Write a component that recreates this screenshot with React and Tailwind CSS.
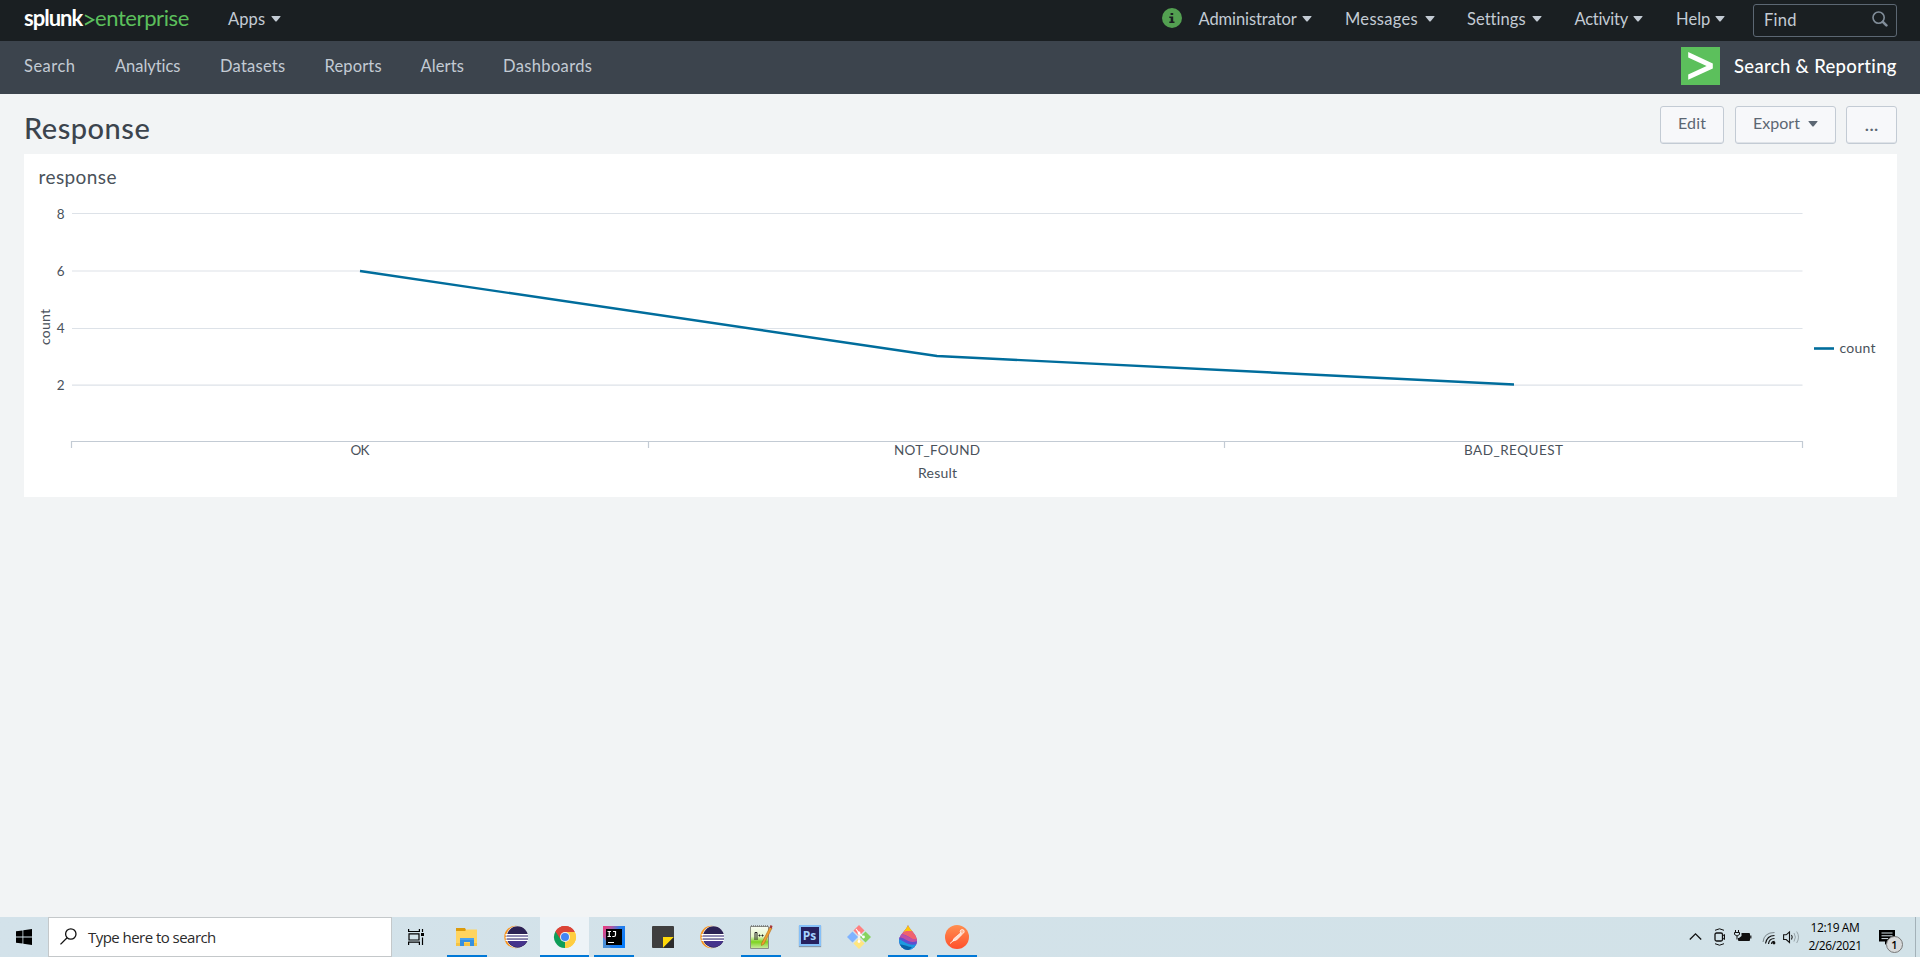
import React from "react";

const Caret = ({ className = "text-[#c3cbd4]" }) => (
  <svg width="10" height="6" viewBox="0 0 10 6" className={className} fill="currentColor">
    <path d="M0.8 0H9.2Q9.8 0.2 9.4 0.8L5.5 5.4Q5 5.8 4.5 5.4L0.6 0.8Q0.2 0.2 0.8 0Z" />
  </svg>
);

const topMenus = [
  { label: "Administrator", box: "w-[146.5px]", text: "w-[98.5px] tracking-[-0.08px]" },
  { label: "Messages", box: "w-[122px]", text: "w-[74.5px] tracking-[0.3px]" },
  { label: "Settings", box: "w-[107.5px]", text: "w-[60px] tracking-[0.05px]" },
  { label: "Activity", box: "w-[101.5px]", text: "w-[53.5px] tracking-[-0.28px]" },
  { label: "Help", box: "w-[77px]", text: "w-[34px] tracking-[0.05px]" },
];

const navLinks = [
  { label: "Search", cls: "w-[91px] tracking-[0.5px]" },
  { label: "Analytics", cls: "w-[105px] tracking-[-0.05px]" },
  { label: "Datasets", cls: "w-[104.5px] tracking-[0.25px]" },
  { label: "Reports", cls: "w-[96px] tracking-[0.15px]" },
  { label: "Alerts", cls: "w-[82.5px] tracking-[0.1px]" },
  { label: "Dashboards", cls: "w-[100px] tracking-[0.35px]" },
];

function TopBar() {
  return (
    <header className="flex h-[41px] bg-[#1a1f22] pl-6 pr-[23px] text-[16.5px] leading-6 text-[#c3cbd4]">
      <div className="flex h-[36px] w-[204px] items-center whitespace-nowrap text-[22px] leading-none">
        <span className="w-[60px] font-bold tracking-[-1px] text-white">splunk</span>
        <svg width="11" height="14" viewBox="0 0 11 14" className="mt-1" fill="none" stroke="#5cc05c" strokeWidth="1.8">
          <path d="M1 2.2L9.4 6.8L1 11.6" />
        </svg>
        <span className="text-[#5cc05c] tracking-[-0.4px]">enterprise</span>
      </div>
      <div className="flex h-[37px] items-start pt-[7px]">
        <span className="w-[43px] tracking-[0.1px]">Apps</span>
        <Caret className="mt-[9px] text-[#c3cbd4]" />
      </div>
      <div className="ml-auto flex h-[37px] items-start pt-[7px]">
        <svg width="20" height="20" viewBox="0 0 20 20" className="mr-[16.5px] mt-px">
          <circle cx="10" cy="10" r="10" fill="#53a051" />
          <path d="M8.600 4.900h2.600v2.200H8.600zM7.300 8.400h3.900v5.200h1.300v1.500H7.300v-1.500h1.400V9.900H7.300z" fill="#1a1f22" />
        </svg>
        {topMenus.map((m) => (
          <div key={m.label} className={`flex items-start ${m.box}`}>
            <span className={`mr-[5px] whitespace-nowrap ${m.text}`}>{m.label}</span>
            <Caret className="mt-[9px] text-[#c3cbd4]" />
          </div>
        ))}
      </div>
      <div className="mt-1 flex h-[33px] w-[144px] items-center justify-between rounded-[3px] border border-[#5c6773] pl-2.5 pr-2">
        <span className="-mt-px tracking-[0.3px] text-[#c3cbd4]">Find</span>
        <svg width="16" height="16" viewBox="0 0 16 16" fill="none" stroke="#818d99" className="-mt-1">
          <circle cx="6.6" cy="6.6" r="5.6" strokeWidth="1.6" />
          <path d="M10.8 10.8L14.4 14.4" strokeWidth="2.6" strokeLinecap="round" />
        </svg>
      </div>
    </header>
  );
}

function NavBar() {
  return (
    <nav className="flex h-[53px] bg-[#3c444d] pl-6 pr-[23px]">
      <div className="flex h-[50px] items-start pt-[13px] text-[16.5px] leading-6 text-[#c3cbd4]">
        {navLinks.map((n) => (
          <span key={n.label} className={n.cls}>{n.label}</span>
        ))}
      </div>
      <div className="ml-auto flex h-[50px] items-center">
        <svg width="39" height="38" viewBox="0 0 39 38">
          <rect width="39" height="38" fill="#5cc05c" />
          <path d="M7.2 5L31.8 16.4V21.4L7.2 32.8V27.4L25.6 19L7.2 10.6Z" fill="#fff" />
        </svg>
        <span className="ml-[14px] w-[163px] whitespace-nowrap text-[18.5px] font-medium leading-6 tracking-[0.32px] text-white">Search &amp; Reporting</span>
      </div>
    </nav>
  );
}

const btn = "flex h-[38px] justify-center rounded-[3px] border border-[#c3cbd4] bg-[#f7f8fa] text-[16px] leading-6 text-[#5c6773] shadow-[inset_0_-1px_0_#dfe3e8]";

function Chart() {
  const rows = [
    { v: 8, y: 213.5, t: 219 },
    { v: 6, y: 271, t: 275.5 },
    { v: 4, y: 328.5, t: 333 },
    { v: 2, y: 385.2, t: 389.5 },
  ];
  return (
    <svg width="1873" height="303" viewBox="24 194 1873 303" className="block" fontSize="13" fill="#4a525b">
      {rows.map((r) => (
        <g key={r.v}>
          <path d={`M72 ${r.y}H1802.5`} stroke="#dde2e8" strokeWidth="1.2" />
          <text x="64.5" y={r.t} textAnchor="end" fontSize="13.5">{r.v}</text>
        </g>
      ))}
      <path d="M71.5 448V441.5H1802.5V448M648.5 441.5V448M1224.5 441.5V448" fill="none" stroke="#c3cbd4" strokeWidth="1.2" />
      <path d="M360 271L937 356L1514 384.5" fill="none" stroke="#006d9c" strokeWidth="2.4" strokeLinejoin="round" />
      <text transform="translate(50 327) rotate(-90)" textAnchor="middle" textLength="36" fontSize="14">count</text>
      <text x="360" y="455" textAnchor="middle" textLength="19" fontSize="13.5">OK</text>
      <text x="937" y="455" textAnchor="middle" textLength="86" fontSize="13.5">NOT_FOUND</text>
      <text x="1513.5" y="455" textAnchor="middle" textLength="99" fontSize="13.5">BAD_REQUEST</text>
      <text x="937.5" y="478" textAnchor="middle" textLength="39" fontSize="14">Result</text>
      <path d="M1814 348.5H1834" stroke="#006d9c" strokeWidth="2.6" />
      <text x="1839.5" y="353" textLength="36" fontSize="14">count</text>
    </svg>
  );
}

const Folder = () => (
  <svg width="24" height="24" viewBox="0 0 24 24">
    <path d="M1 3h9l1 2v3H1z" fill="#dc9b0c" />
    <path d="M1 6h9l1.500-1.500H22V21H1z" fill="#ffd45f" />
    <path d="M1 18h21v3H1z" fill="#f5c343" />
    <path d="M5 13h14v8h-4v-4H9v4H5z" fill="#3590e0" />
    <path d="M5 13h14v2H5z" fill="#4aa3ee" />
  </svg>
);
const Eclipse = () => (
  <svg width="24" height="24" viewBox="0 0 24 24">
    <circle cx="11.500" cy="12" r="11.200" fill="#f7941e" />
    <circle cx="13.200" cy="12" r="11" fill="#fff" />
    <circle cx="13.500" cy="12" r="10.700" fill="#2c2255" />
    <path d="M4 16h19c-2 4-5 6-9.500 6S6 19 4 16z" fill="#46348c" />
    <path d="M1.500 9H24v1.600H1.500zM1.500 12H24v1.600H1.500zM1.500 14.800H24v1.300H1.500z" fill="#fff" />
    <path d="M2.500 10.600H24V12H2.500zM2.500 13.600H24v1.200H2.500z" fill="#8f8ab8" />
  </svg>
);
const Chrome = () => (
  <svg width="24" height="24" viewBox="0 0 24 24">
    <path d="M12 12L2.470 6.500A11 11 0 0 1 21.530 6.500z" fill="#db4437" />
    <path d="M12 12L21.530 6.500A11 11 0 0 1 12 23z" fill="#ffcd40" />
    <path d="M12 12L12 23A11 11 0 0 1 2.470 6.500z" fill="#0f9d58" />
    <path d="M12 7H21.800A11 11 0 0 0 2.470 6.500L7.700 14.500z" fill="#db4437" />
    <path d="M12 7H21.800A11 11 0 0 1 12 23L16.300 14.500z" fill="#ffcd40" />
    <circle cx="12" cy="12" r="5" fill="#f1f1f1" />
    <circle cx="12" cy="12" r="4" fill="#4285f4" />
  </svg>
);
const IntelliJ = () => (
  <svg width="24" height="24" viewBox="0 0 24 24">
    <defs>
      <linearGradient id="ij" x1="0" y1="0" x2="1" y2="0.600">
        <stop offset="0" stopColor="#f0387a" />
        <stop offset="0.300" stopColor="#b655a0" />
        <stop offset="0.600" stopColor="#2a7de8" />
        <stop offset="1" stopColor="#087cfa" />
      </linearGradient>
    </defs>
    <rect x="1" y="1" width="22" height="22" fill="url(#ij)" />
    <path d="M1 12l8 11H1z" fill="#4a90d8" />
    <rect x="4" y="4" width="16" height="16" fill="#000" />
    <path d="M5.500 6.500h3.500M7.250 6.500v5M5.500 11.500h3.500M11 6.500h2.500v3.500q0 1.500-1.500 1.500H10.300M6 17.500h6" stroke="#fff" strokeWidth="1.200" fill="none" />
  </svg>
);
const Sticky = () => (
  <svg width="24" height="24" viewBox="0 0 24 24">
    <rect x="1" y="1" width="22" height="22" rx="1" fill="#3f3f3f" />
    <path d="M12 12h11L12 23z" fill="#ffd90a" />
    <path d="M23 12v11H12z" fill="#2c2c2c" />
  </svg>
);
const Notepad = () => (
  <svg width="24" height="26" viewBox="0 0 24 26">
    <defs>
      <linearGradient id="np" x1="0" y1="0" x2="0" y2="1">
        <stop offset="0" stopColor="#f8fbf2" />
        <stop offset="0.450" stopColor="#e5f7c8" />
        <stop offset="0.700" stopColor="#7dd321" />
        <stop offset="1" stopColor="#cdeca3" />
      </linearGradient>
    </defs>
    <path d="M1.500 2.500h18v22h-18z" fill="url(#np)" stroke="#8a8f86" strokeWidth="1" />
    <path d="M2 2h17" stroke="#777" strokeWidth="1.500" strokeDasharray="1 1" />
    <path d="M6 16V8.500h2V16M9.500 11.500h2M12.500 11.500h2M10.500 10.500v2M13.500 10.500v2" stroke="#222" fill="none" strokeWidth="1" />
    <path d="M12.500 19.500L21 3l2 1-8 16-2.500 1.500z" fill="#f0a030" stroke="#b06a18" strokeWidth="0.600" />
    <path d="M20.500 3.500l1-2.500 2 1-.7 2.500z" fill="#a83a3a" />
  </svg>
);
const Photoshop = () => (
  <div className="mb-[3px] flex h-[21px] w-[22px] items-center justify-center border-2 border-[#86c0f8] bg-[#26215f] text-[12px] font-bold leading-none text-[#a5d2ff] shadow-[0_1px_1px_#8899aa]">Ps</div>
);
const Git = () => (
  <svg width="24" height="24" viewBox="0 0 24 24">
    <path d="M12 0l5.500 5.500L12 11 6.500 5.500z" fill="#ff8080" />
    <path d="M5.500 6.500L11 12l-5.500 5.500L0 12z" fill="#80b3ff" />
    <path d="M18.500 6.500L24 12l-5.500 5.500L13 12z" fill="#87d35f" />
    <path d="M12 13l5.500 5.500L12 24l-5.500-5.500z" fill="#ffe680" />
    <path d="M9 4l3 4v8M12 8l4 4" stroke="#fff" strokeWidth="1.100" fill="none" />
    <circle cx="12" cy="8" r="1.400" fill="#fff" />
    <circle cx="16.500" cy="12" r="1.400" fill="#fff" />
    <circle cx="12" cy="16.500" r="1.400" fill="#fff" />
  </svg>
);
const Drop = () => (
  <svg width="20" height="25" viewBox="0 0 20 25">
    <defs>
      <clipPath id="dropClip">
        <path d="M10 0C11 4 19 9 19 16A9 9 0 0 1 1 16C1 9 8 6 10 0z" />
      </clipPath>
    </defs>
    <g clipPath="url(#dropClip)">
      <rect width="20" height="25" fill="#8a4bc8" />
      <path d="M6 0h9v8L5 7z" fill="#ffc60a" />
      <path d="M3 9C8 4 12 7 20 6V16C14 16 12 10 3 9z" fill="#f0626e" />
      <path d="M0 9C8 8 11 15 20 14V18C12 20 8 12 0 13z" fill="#c04fa5" />
      <path d="M0 12C7 12 10 20 20 16V20C12 22 8 17 0 18z" fill="#5d4fd0" />
      <path d="M0 14C6 15 9 22 20 19V25H0z" fill="#1c9be0" />
      <path d="M0 20c5-2 9 2 14 2l-3 3H0z" fill="#0a62a8" />
    </g>
  </svg>
);
const Postman = () => (
  <svg width="24" height="24" viewBox="0 0 24 24">
    <defs>
      <linearGradient id="pm" x1="0" y1="0" x2="0" y2="1">
        <stop offset="0" stopColor="#ff8f50" />
        <stop offset="1" stopColor="#ff4f2b" />
      </linearGradient>
    </defs>
    <circle cx="12" cy="12" r="12" fill="url(#pm)" />
    <circle cx="17.200" cy="6.500" r="2" fill="#ffb898" stroke="#fff" strokeWidth="0.700" />
    <path d="M15.500 8l1.500 1.500-5.500 5.500-3.500 1 .8-2.300z" fill="#ffe0d2" stroke="#fff" strokeWidth="0.700" />
    <path d="M5 18.500l4-3.500" stroke="#fff" strokeWidth="0.900" />
  </svg>
);

const apps = [
  { id: "files", Icon: Folder, open: true },
  { id: "eclipse", Icon: Eclipse },
  { id: "chrome", Icon: Chrome, active: true },
  { id: "idea", Icon: IntelliJ, open: true },
  { id: "sticky", Icon: Sticky },
  { id: "eclipse2", Icon: Eclipse },
  { id: "npp", Icon: Notepad, open: true },
  { id: "ps", Icon: Photoshop },
  { id: "git", Icon: Git },
  { id: "paint", Icon: Drop, open: true },
  { id: "postman", Icon: Postman, open: true },
];

function Taskbar() {
  return (
    <footer className="flex h-10 bg-linear-to-r from-[#d3e2ea] to-[#d2e2e8] font-['Open_Sans',sans-serif]">
      <div className="flex w-12 items-center justify-center">
        <svg width="16" height="16" viewBox="0 0 16 16">
          <path d="M0 2.300L6.500 1.400V7.600H0zM7.300 1.300L16 0V7.600H7.300zM0 8.400H6.500V14.600L0 13.700zM7.300 8.400H16V16L7.300 14.700z" />
        </svg>
      </div>
      <div className="flex w-[344px] items-center border border-[#c4c8ca] bg-white pl-[11px]">
        <svg width="17" height="17" viewBox="0 0 17 17" fill="none" stroke="#111" strokeWidth="1.300" className="-mt-0.5">
          <circle cx="10.800" cy="6" r="5.200" />
          <path d="M7.100 9.800L0.500 16.400" />
        </svg>
        <span className="ml-[11px] text-[15px] tracking-[-0.54px] text-[#2b2b2b]">Type here to search</span>
      </div>
      <div className="flex w-[50px] items-center pl-4">
        <svg width="17" height="16" viewBox="0 0 17 16" fill="none" stroke="#000" strokeWidth="1.200">
          <path d="M0.600 0V2.500H11.400V0M0.600 16V13.200H11.400V16M1 4.800H11V11H1zM14.500 0V3M14.500 8.500V16" />
          <path d="M13 4h3v3h-3z" fill="#000" stroke="none" />
        </svg>
      </div>
      <div className="flex">
        {apps.map(({ id, Icon, open, active }) => (
          <div key={id} className={`flex h-10 w-[49px] flex-col items-center ${active ? "bg-[#edf3f7]" : ""}`}>
            <div className="flex h-[38px] items-center justify-center pt-0.5">
              <Icon />
            </div>
            <div className={`h-0.5 ${active ? "w-[49px] bg-[#0078d7]" : open ? "w-10 bg-[#0078d7]" : ""}`} />
          </div>
        ))}
      </div>
      <div className="ml-auto flex items-center">
        <svg width="112" height="18" viewBox="0 0 112 18" fill="none" stroke="#111" strokeWidth="1.300">
          <path d="M0.800 11.500L6.500 5.800L12.200 11.500" />
          <path d="M26 2.300q4.500-3 9 0M26 15.700q4.500 3 9 0" strokeWidth="1" />
          <rect x="26" y="5" width="7.500" height="8" rx="1.500" />
          <path d="M33.500 8l2-1.500v5L33.500 10" strokeWidth="1" />
          <path d="M52.500 5.500H60.500V12.500H49.500V10" strokeWidth="1" />
          <path d="M52.500 6H60V12H50V10L52.500 8z" fill="#111" stroke="none" />
          <path d="M61.800 7.500v3" strokeWidth="1.200" />
          <path d="M46.500 2v2.500M49.500 2v2.500M48 8v3.500" strokeWidth="1" />
          <path d="M45.500 4.500h5v2q-2.500 3-5 0z" strokeWidth="1" />
          <g stroke="#7a858a" strokeWidth="1"><path d="M74 14Q75 4.500 85.500 4.500" /></g>
          <path d="M76.500 15.500Q78 7.500 85.500 7.500M79.500 16Q80 10.500 85.500 10.500M82.500 16Q82.800 13.400 85.500 13.400" strokeWidth="1.200" />
          <circle cx="85" cy="15" r="1.400" fill="#111" stroke="none" />
          <path d="M94.600 6.800h2.600L100.500 4v10.500l-3.300-3h-2.600z" strokeWidth="1.100" />
          <path d="M102.500 7q1.500 2 0 4.500" strokeWidth="1.100" />
          <path d="M105 5q2.800 4 0 8.500M107.700 3.500q3.600 5.500 0 11.500" stroke="#98a5aa" strokeWidth="1" />
        </svg>
        <div className="ml-2 flex w-[52px] flex-col items-center whitespace-nowrap text-[12px] leading-[18px] tracking-[-0.4px] text-black">
          <span>12:19 AM</span>
          <span>2/26/2021</span>
        </div>
        <div className="relative ml-[18px] h-4 w-4">
          <svg width="16" height="16" viewBox="0 0 16 16">
            <path d="M0 1H16V12.500H9L6 16V12.500H0z" />
            <path d="M2.500 4H13.500M2.500 6.800H13.500M2.500 9.600H9" stroke="#d3e2e8" />
          </svg>
          <div className="absolute left-[7px] top-[7px] flex h-[17px] w-[17px] items-center justify-center rounded-full border border-[#777] bg-[#d8dadb] text-[11px] font-semibold leading-none text-black">1</div>
        </div>
        <div className="ml-5 h-10 w-[5px] border-l border-[#a3b1b8]" />
      </div>
    </footer>
  );
}

export default function App() {
  return (
    <div className="flex h-screen w-full flex-col overflow-hidden bg-[#f2f4f5] font-['Lato',sans-serif]">
      <TopBar />
      <NavBar />
      <main className="flex flex-1 flex-col pl-6 pr-[23px]">
        <div className="flex h-[60px] justify-between pt-3">
          <h1 className="pt-[6px] text-[29px] font-medium leading-8 tracking-[0.5px] text-[#3c444d]">Response</h1>
          <div className="flex">
            <div className={`${btn} w-16 pt-1 tracking-[0.2px]`}>Edit</div>
            <div className={`${btn} ml-[11px] w-[101px] pt-1`}>
              <span className="mr-2">Export</span>
              <Caret className="mt-[10px] text-[#5c6773]" />
            </div>
            <div className={`${btn} ml-2.5 w-[51px] pt-[4px] text-[20px]`}>...</div>
          </div>
        </div>
        <section className="h-[343px] bg-white">
          <h2 className="h-10 pl-[14.5px] pt-[11px] text-[19px] leading-6 tracking-[0.42px] text-[#4a525b]">response</h2>
          <Chart />
        </section>
      </main>
      <Taskbar />
    </div>
  );
}
